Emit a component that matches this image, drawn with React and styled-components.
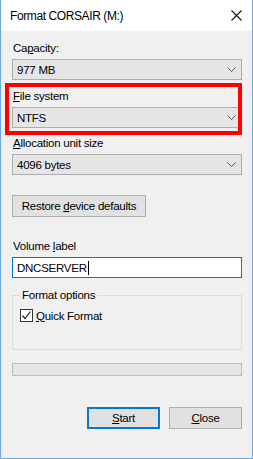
import React from "react";
import styled, { createGlobalStyle } from "styled-components";

const Global = createGlobalStyle`
  html, body { margin: 0; padding: 0; background: #ffffff; }
  body { font-family: "Liberation Sans", Arial, sans-serif; font-size: 11.5px; letter-spacing: -0.25px; color: #000; }
`;

const Window = styled.div`
  position: relative;
  box-sizing: border-box;
  width: 253px;
  height: 459px;
  border: 1px solid #6fa8dc;
  border-top: none;
  background: #f0f0f0;
  display: flex;
  flex-direction: column;
`;

const TitleBar = styled.div`
  height: 31px;
  background: #ffffff;
  display: flex;
  align-items: center;
  justify-content: space-between;
  padding: 0 10px 0 9px;
  font-size: 12px;
  letter-spacing: -0.4px;
`;

const Body = styled.div`
  flex: 1;
  display: flex;
  flex-direction: column;
  padding: 9px 10px 0 11px;
`;

const Field = styled.div`
  display: flex;
  flex-direction: column;
  gap: 3px;
  margin-top: ${(p) => p.$mt || 0}px;
`;

const Label = styled.div`
  height: 16px;
  line-height: 16px;
  padding-left: 1px;
`;

const U = styled.span`
  text-decoration: underline;
  text-underline-offset: 1px;
`;

const Combo = styled.div`
  box-sizing: border-box;
  height: 21px;
  border: 1px solid #adadad;
  background: #e5e5e5;
  display: flex;
  align-items: center;
  justify-content: space-between;
  padding: 0 5px 0 4px;
`;

const Button = styled.div`
  box-sizing: border-box;
  height: 22px;
  width: ${(p) => p.$w}px;
  border: ${(p) => (p.$default ? "2px solid #0078d7" : "1px solid #adadad")};
  background: #e1e1e1;
  display: flex;
  align-items: center;
  justify-content: center;
`;

const Input = styled.div`
  box-sizing: border-box;
  height: 21px;
  border: 1px solid #0078d7;
  background: #ffffff;
  display: flex;
  align-items: center;
  padding-left: 4px;
`;

const Caret = styled.span`
  display: inline-block;
  width: 1px;
  height: 14px;
  background: #000;
  margin-left: 1px;
`;

const Group = styled.fieldset`
  box-sizing: border-box;
  margin: 10px 0 0 0;
  height: 62px;
  border: 1px solid #dcdcdc;
  padding: 6px 6px 0 7px;
  min-width: 0;
  legend {
    padding: 0 2px;
    margin-left: 0px;
    line-height: 15px;
  }
`;

const CheckRow = styled.div`
  display: flex;
  align-items: center;
  gap: 3px;
`;

const Box = styled.div`
  box-sizing: border-box;
  width: 13px;
  height: 13px;
  border: 1px solid #333;
  background: #fff;
  display: flex;
  align-items: center;
  justify-content: center;
`;

const Progress = styled.div`
  box-sizing: border-box;
  height: 13px;
  margin-top: 13px;
  border: 1px solid #bcbcbc;
  background: #e6e6e6;
`;

const ButtonRow = styled.div`
  display: flex;
  justify-content: flex-end;
  gap: 9px;
  margin-top: 31px;
`;

const Highlight = styled.div`
  position: absolute;
  left: 4px;
  top: 83px;
  width: 237px;
  height: 52px;
  box-sizing: border-box;
  border: 4px solid #ff0000;
  pointer-events: none;
`;

const Chevron = () => (
  <svg width="9" height="6" viewBox="0 0 9 6">
    <path d="M0.5 0.5 L4.5 4.5 L8.5 0.5" fill="none" stroke="#555" strokeWidth="1" />
  </svg>
);

const CloseX = () => (
  <svg width="11" height="11" viewBox="0 0 11 11">
    <path d="M0.5 0.5 L10.5 10.5 M10.5 0.5 L0.5 10.5" stroke="#111" strokeWidth="1.1" />
  </svg>
);

const Check = () => (
  <svg width="11" height="11" viewBox="0 0 11 11">
    <path d="M1.5 5.5 L4 8.5 L9.5 1.5" fill="none" stroke="#222" strokeWidth="1.2" />
  </svg>
);

export default function App() {
  return (
    <>
      <Global />
      <Window>
        <TitleBar>
          <span>Format CORSAIR (M:)</span>
          <CloseX />
        </TitleBar>
        <Body>
          <Field>
            <Label>
              Ca<U>p</U>acity:
            </Label>
            <Combo>
              <span>977 MB</span>
              <Chevron />
            </Combo>
          </Field>
          <Field $mt={8}>
            <Label>
              <U>F</U>ile system
            </Label>
            <Combo>
              <span>NTFS</span>
              <Chevron />
            </Combo>
          </Field>
          <Field $mt={7}>
            <Label>
              <U>A</U>llocation unit size
            </Label>
            <Combo>
              <span>4096 bytes</span>
              <Chevron />
            </Combo>
          </Field>
          <Field $mt={20}>
            <Button $w={134}>
              <span>
                Restore <U>d</U>evice defaults
              </span>
            </Button>
          </Field>
          <Field $mt={21}>
            <Label>
              Volume <U>l</U>abel
            </Label>
            <Input>
              DNCSERVER
              <Caret />
            </Input>
          </Field>
          <Group>
            <legend>Format options</legend>
            <CheckRow>
              <Box>
                <Check />
              </Box>
              <span>
                <U>Q</U>uick Format
              </span>
            </CheckRow>
          </Group>
          <Progress />
          <ButtonRow>
            <Button $w={73} $default>
              <span>
                <U>S</U>tart
              </span>
            </Button>
            <Button $w={73}>
              <span>
                <U>C</U>lose
              </span>
            </Button>
          </ButtonRow>
        </Body>
        <Highlight />
      </Window>
    </>
  );
}
